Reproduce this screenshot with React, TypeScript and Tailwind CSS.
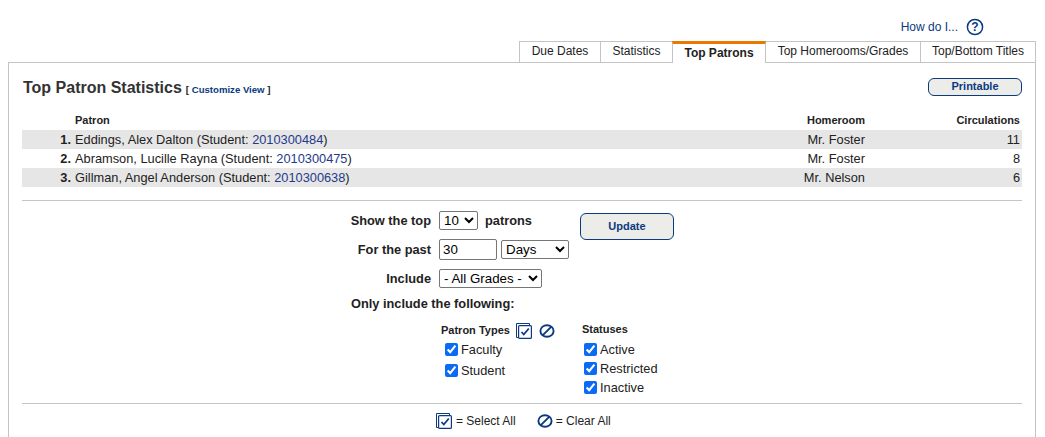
import React from 'react';

const tabs = [
    { label: 'Due Dates', width: 'w-[82px]' },
    { label: 'Statistics', width: 'w-[73px]' },
    { label: 'Top Patrons', width: 'w-[94px]', active: true },
    { label: 'Top Homerooms/Grades', width: 'w-[156px]' },
    { label: 'Top/Bottom Titles', width: 'w-[116px]' },
];

const patrons = [
    { rank: 1, name: 'Eddings, Alex Dalton', id: '2010300484', room: 'Mr. Foster', count: 11 },
    { rank: 2, name: 'Abramson, Lucille Rayna', id: '2010300475', room: 'Mr. Foster', count: 8 },
    { rank: 3, name: 'Gillman, Angel Anderson', id: '2010300638', room: 'Mr. Nelson', count: 6 },
];

const SelectAllIcon = () => (
    <svg width="16" height="16" viewBox="0 0 16 16" fill="none" stroke="#0b3a80" className="block">
        <path d="M2.5 14.5H.5V.5h13v2" strokeWidth="1" />
        <rect x="2.6" y="2.6" width="12.8" height="12.8" rx="1" strokeWidth="1.2" fill="#fff" />
        <path d="M5.5 9l2.3 2.5 5-6" strokeWidth="1.8" />
    </svg>
);

const ClearAllIcon = () => (
    <svg width="16" height="14" viewBox="0 0 16 14" fill="none" stroke="#0b3a80" strokeWidth="1.9" className="block">
        <ellipse cx="8" cy="7" rx="6.6" ry="5.8" />
        <path d="M3.6 11.4 12.4 2.6" />
    </svg>
);

const Check = ({ label }: { label: string }) => (
    <label className="flex items-center h-[19px] gap-[3px] text-[12.8px] text-[#222]">
        <input type="checkbox" defaultChecked className="m-0 w-[13px] h-[13px] accent-[#0a6cf5]" />
        <span>{label}</span>
    </label>
);

const selectClass = 'h-[19px] border border-[#767676] rounded-[2px] bg-white text-[13.33px] text-black';

export default function App() {
    return (
        <div className="h-[437px] overflow-hidden bg-white font-['Liberation_Sans',Arial,sans-serif] text-[#222]">
            <div className="flex justify-end items-center h-[41px] pt-[13px] pr-[61px] gap-[8px] text-[12px] text-[#0b3a80]">
                <span>How do I...</span>
                <svg width="18" height="18" viewBox="0 0 18 18" fill="none" className="block">
                    <circle cx="9" cy="9" r="7.6" stroke="#0b3a80" strokeWidth="1.5" />
                    <text x="9" y="13.2" textAnchor="middle" fontSize="12" fontWeight="700" fill="#0b3a80">?</text>
                </svg>
            </div>

            <div className="flex justify-end pr-[9px] h-[21px]">
                {tabs.map(tab => (
                    <div
                        key={tab.label}
                        className={`${tab.width} -ml-px h-[21px] flex items-center justify-center border border-[#c4c4c4] border-b-0 text-[12px] pb-[2px] bg-white ${tab.active ? 'relative z-10 border-t-[3px] border-t-[#e87800] font-bold pb-0 -mb-px h-[22px]' : ''}`}
                    >
                        {tab.label}
                    </div>
                ))}
            </div>

            <div className="ml-[8px] mr-[9px] h-[380px] border border-[#c4c4c4] border-b-0 pl-[13px] pr-[12px]">
                <div className="flex items-center justify-between h-[48px] pt-[1px]">
                    <div className="flex items-baseline gap-[4px] pl-px">
                        <h1 className="text-[16px] font-bold text-[#333]">Top Patron Statistics</h1>
                        <span className="text-[9.6px] font-bold text-[#222]">
                            [ <span className="text-[#0b3a80]">Customize View</span> ]
                        </span>
                    </div>
                    <button className="w-[94px] h-[18px] mr-px mb-[2px] rounded-[6px] border border-[#0b3a80] bg-[#ecece8] text-[11px] font-bold text-[#0b3a80] leading-none">
                        Printable
                    </button>
                </div>

                <div className="flex items-center h-[19px] mr-px text-[11px] font-bold">
                    <div className="w-[53px]" />
                    <div className="flex-1">Patron</div>
                    <div className="w-[60px] text-right">Homeroom</div>
                    <div className="w-[157px] pr-[2px] text-right">Circulations</div>
                </div>

                {patrons.map(p => (
                    <div key={p.rank} className="flex items-center h-[19px] mr-px text-[12.8px] even:bg-white odd:bg-[#e6e6e6]">
                        <div className="w-[49px] text-right font-bold">{p.rank}.</div>
                        <div className="flex-1 pl-[4px]">
                            {p.name} (Student: <span className="text-[#1f3a8a]">{p.id}</span>)
                        </div>
                        <div className="w-[80px] text-right">{p.room}</div>
                        <div className="w-[157px] pr-[2px] text-right">{p.count}</div>
                    </div>
                ))}

                <div className="mt-[13px] mr-px border-t border-[#c4c4c4]" />

                <div className="flex flex-col h-[203px] mr-px">
                    <div className="flex items-start pt-[10px] h-[29px]">
                        <div className="w-[417px] h-[19px] leading-[19px] pr-[8px] text-right text-[12.8px] font-bold">Show the top</div>
                        <select className={`${selectClass} w-[39px]`} defaultValue="10">
                            <option>10</option>
                        </select>
                        <span className="h-[19px] leading-[19px] ml-[7px] text-[12.8px] font-bold">patrons</span>
                        <button className="w-[94px] h-[27px] ml-[48px] mt-[2px] rounded-[6px] border border-[#0b3a80] bg-[#ecece8] text-[11px] font-bold text-[#0b3a80] leading-none">
                            Update
                        </button>
                    </div>
                    <div className="flex items-center mt-[9px]">
                        <div className="w-[417px] pr-[8px] text-right text-[12.8px] font-bold">For the past</div>
                        <input
                            defaultValue="30"
                            className="w-[58px] h-[21px] px-[3px] border border-[#767676] rounded-[2px] text-[13.33px] text-black outline-none"
                        />
                        <select className={`${selectClass} w-[68px] ml-[4px]`} defaultValue="Days">
                            <option>Days</option>
                        </select>
                    </div>
                    <div className="flex items-center mt-[9px]">
                        <div className="w-[417px] pr-[8px] text-right text-[12.8px] font-bold">Include</div>
                        <select className={`${selectClass} w-[103px]`} defaultValue="- All Grades -">
                            <option>- All Grades -</option>
                        </select>
                    </div>
                    <div className="mt-[8px] pl-[329px] h-[15px] leading-[15px] text-[12.8px] font-bold">Only include the following:</div>

                    <div className="flex mt-[10px] pl-[419px]">
                        <div className="w-[141px]">
                            <div className="flex items-center h-[19px] text-[11px] font-bold">
                                <span>Patron Types</span>
                                <span className="ml-[6px]"><SelectAllIcon /></span>
                                <span className="ml-[7px]"><ClearAllIcon /></span>
                            </div>
                            <div className="pl-[4px]">
                                <Check label="Faculty" />
                                <div className="h-[2px]" />
                                <Check label="Student" />
                            </div>
                        </div>
                        <div>
                            <div className="h-[16px] leading-[16px] text-[11px] font-bold">Statuses</div>
                            <div className="pl-[2px] pt-[3px]">
                                <Check label="Active" />
                                <Check label="Restricted" />
                                <Check label="Inactive" />
                            </div>
                        </div>
                    </div>

                    <div className="mt-[6px] border-t border-[#c4c4c4]" />
                    <div className="flex items-center pl-[414px] pt-[8px] text-[12px]">
                        <SelectAllIcon />
                        <span className="ml-[4px]">= Select All</span>
                        <span className="ml-[21px]"><ClearAllIcon /></span>
                        <span className="ml-[3px]">= Clear All</span>
                    </div>
                </div>
            </div>
        </div>
    );
}
